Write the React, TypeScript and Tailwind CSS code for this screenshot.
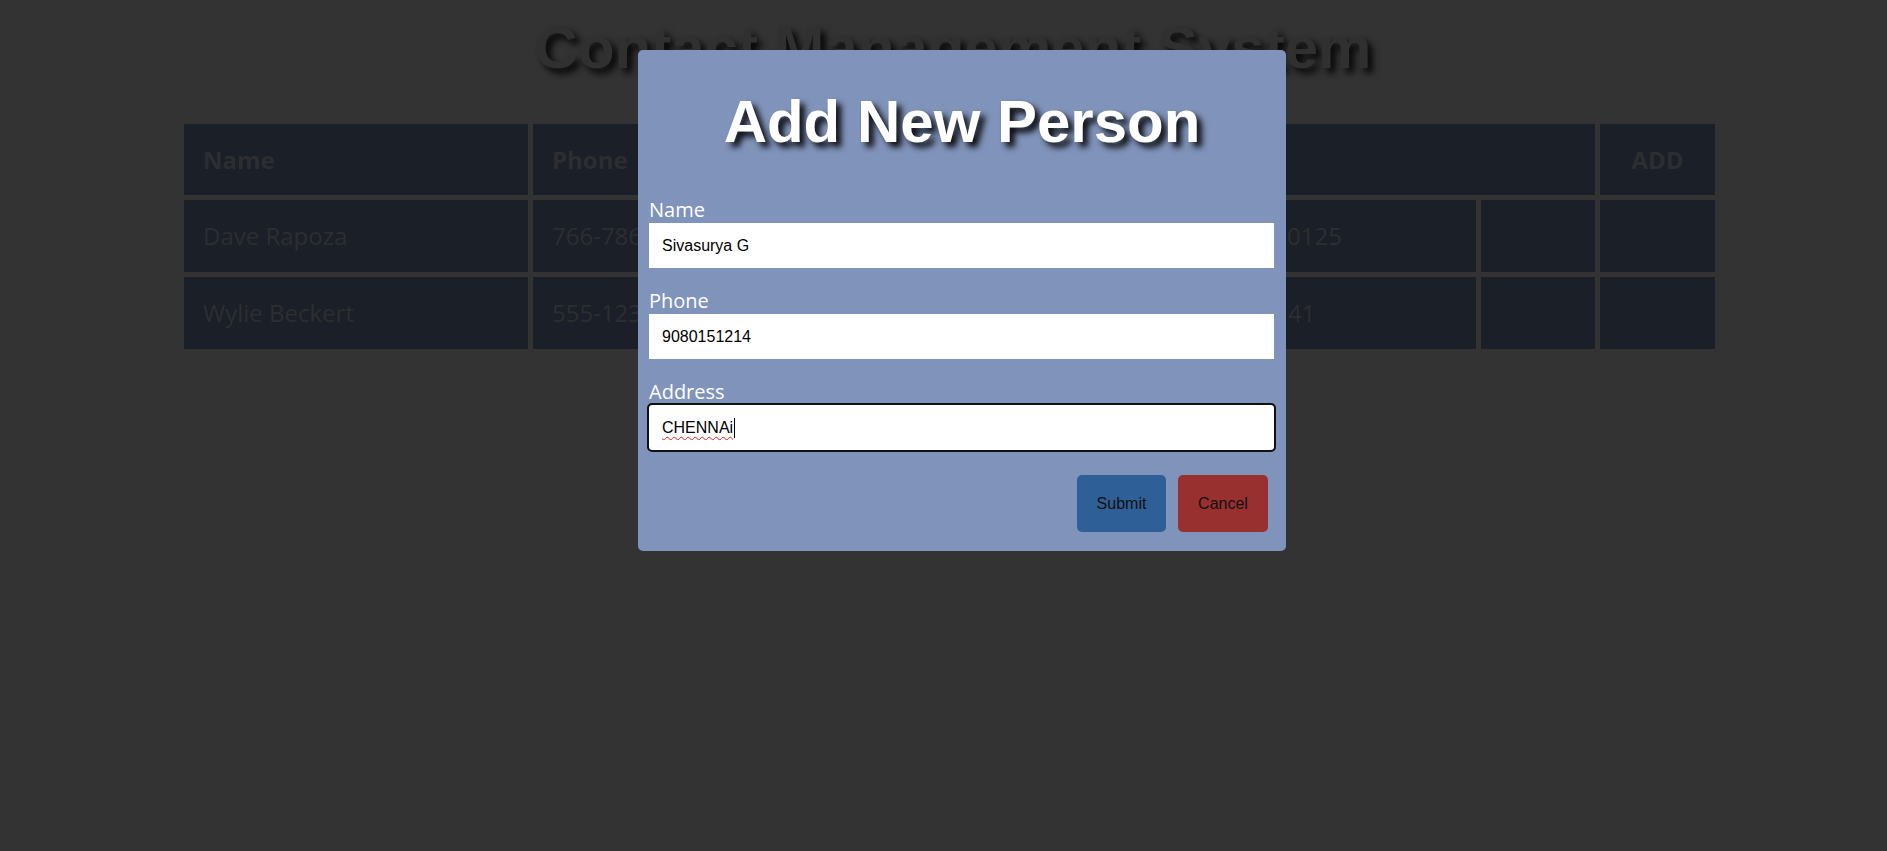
const rows = [
  { name: "Dave Rapoza", phone: "766-786-3321", address: "123 Maple Street, Springfield City 90125" },
  { name: "Wylie Beckert", phone: "555-123-4567", address: "42 Evergreen Terrace, Oakland 94141" },
];

function Field({ label, value }: { label: string; value: string }) {
  return (
    <div>
      <label className="block text-[20px] leading-[27px] text-white font-['Open_Sans',sans-serif]">{label}</label>
      <input
        defaultValue={value}
        className="block w-full h-[45px] bg-white pl-[13px] text-[16px] text-black outline-none font-['Liberation_Sans',Arial,sans-serif]"
      />
    </div>
  );
}

export default function App() {
  return (
    <div className="relative h-[851px] overflow-hidden bg-[#333333] font-['Open_Sans',sans-serif]">
      <h1 className="pt-[13px] pl-[19px] text-center text-[60px] leading-[69px] font-bold text-[#303030] font-['Liberation_Sans',Arial,sans-serif] [text-shadow:5px_5px_7px_rgba(0,0,0,0.9)]">
        Contact Management System
      </h1>

      <table className="mt-[37px] ml-[179px] w-[1541px] table-fixed border-separate border-spacing-[5px] text-[24px] text-[#2c2e32]">
        <colgroup>
          <col className="w-[344px]" />
          <col className="w-[340px]" />
          <col className="w-[598px]" />
          <col className="w-[114px]" />
          <col className="w-[115px]" />
        </colgroup>
        <thead>
          <tr className="h-[71px]">
            <th className="bg-[#1b1f27] pl-[19px] text-left font-bold">Name</th>
            <th className="bg-[#1b1f27] pl-[19px] text-left font-bold">Phone</th>
            <th colSpan={2} className="bg-[#1b1f27] pl-[19px] text-left font-bold">Address</th>
            <th className="bg-[#1b1f27] text-center font-bold">ADD</th>
          </tr>
        </thead>
        <tbody>
          {rows.map((r) => (
            <tr key={r.name} className="h-[72px]">
              <td className="bg-[#1b1f27] pl-[19px] whitespace-nowrap overflow-hidden">{r.name}</td>
              <td className="bg-[#1b1f27] pl-[19px] whitespace-nowrap overflow-hidden">{r.phone}</td>
              <td className="bg-[#1b1f27] pl-[19px] whitespace-nowrap overflow-hidden">{r.address}</td>
              <td className="bg-[#1b1f27]" />
              <td className="bg-[#1b1f27]" />
            </tr>
          ))}
        </tbody>
      </table>

      {/* modal */}
      <div className="absolute left-[638px] top-[50px] w-[648px] h-[501px] rounded-[5px] bg-[#8093ba] pt-[37px] px-[11px]">
        <h2 className="text-center text-[60px] leading-[69px] font-bold text-white font-['Liberation_Sans',Arial,sans-serif] [text-shadow:5px_5px_6px_rgba(0,0,0,0.95)]">
          Add New Person
        </h2>
        <div className="mt-[40px] flex flex-col gap-[19px] pr-px">
          <Field label="Name" value="Sivasurya G" />
          <Field label="Phone" value="9080151214" />
          <div>
            <label className="block text-[20px] leading-[27px] text-white">Address</label>
            <div className="flex items-center h-[45px] bg-white pl-[13px] rounded-[3px] outline-2 outline-[#101010] text-[16px] text-black font-['Liberation_Sans',Arial,sans-serif]">
              <span className="underline decoration-wavy decoration-[#e02020] decoration-1 underline-offset-[3px]">CHENNAi</span>
              <span className="ml-px h-[20px] w-px bg-black" />
            </div>
          </div>
        </div>
        <div className="mt-[25px] flex justify-end gap-[12px] pr-[7px] font-['Liberation_Sans',Arial,sans-serif] text-[16px] text-[#111]">
          <button className="h-[57px] w-[89px] rounded-[5px] bg-[#2e5f97]">Submit</button>
          <button className="h-[57px] w-[90px] rounded-[5px] bg-[#983030]">Cancel</button>
        </div>
      </div>
    </div>
  );
}
